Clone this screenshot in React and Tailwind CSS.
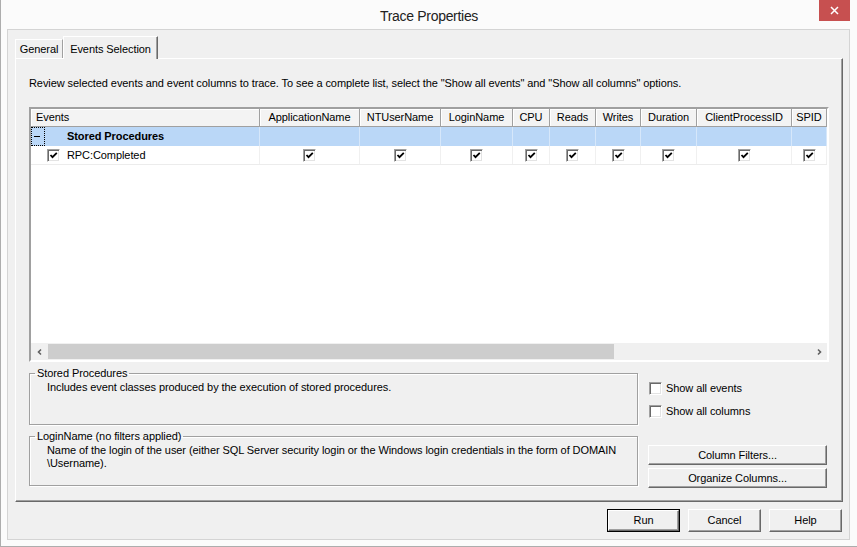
import React from 'react';

// column layout of the event grid (widths in px)
const COLUMNS = [
  { name: 'Events', w: 229 },
  { name: 'ApplicationName', w: 100 },
  { name: 'NTUserName', w: 81 },
  { name: 'LoginName', w: 72 },
  { name: 'CPU', w: 37 },
  { name: 'Reads', w: 46 },
  { name: 'Writes', w: 45 },
  { name: 'Duration', w: 56 },
  { name: 'ClientProcessID', w: 95 },
  { name: 'SPID', w: 35 },
];

const CheckBox = ({ checked }) => (
  <div className="w-[13px] h-[13px] shrink-0 bg-white border border-t-[#a0a0a0] border-l-[#a0a0a0] border-r-white border-b-white shadow-[inset_1px_1px_0_#696969,inset_-1px_-1px_0_#e3e3e3] flex items-center justify-center">
    {checked && (
      <svg width="11" height="11" viewBox="0 0 11 11">
        <polyline points="2.5,5 4.5,7.2 8.8,2.8" fill="none" stroke="#000" strokeWidth="1.8" />
      </svg>
    )}
  </div>
);

const Button = ({ children, primary, className = '' }) => (
  <div className={`${primary ? 'border border-black' : ''} ${className}`}>
    <div className="h-full w-full bg-[#f0f0f0] border border-t-white border-l-white border-r-[#696969] border-b-[#696969] shadow-[inset_-1px_-1px_0_#a0a0a0] flex items-center justify-center text-[11px] text-black">
      {children}
    </div>
  </div>
);

const Chevron = ({ dir }) => (
  <svg width="8" height="8" viewBox="0 0 8 8">
    <polyline
      points={dir === 'left' ? '5,1.5 2.5,4 5,6.5' : '3,1.5 5.5,4 3,6.5'}
      fill="none"
      stroke="#606060"
      strokeWidth="1.6"
    />
  </svg>
);

const EventGrid = () => (
  <div className="w-[800px] h-[255px] shrink-0 border-2 border-t-[#a0a0a0] border-l-[#a0a0a0] border-r-white border-b-white bg-white flex flex-col">
    {/* header */}
    <div className="flex h-[18px] shrink-0">
      {COLUMNS.map((c, i) => (
        <div
          key={c.name}
          style={{ width: c.w }}
          className={`h-full shrink-0 bg-[#f3f3f3] border-r border-b border-[#a0a0a0] shadow-[inset_1px_1px_0_#ffffff] flex items-center text-[11px] ${i === 0 ? 'pl-[5px]' : 'justify-center'}`}
        >
          {c.name}
        </div>
      ))}
    </div>
    {/* category row */}
    <div className="flex h-[19px] shrink-0 bg-[#bad7f7]">
      {COLUMNS.map((c, i) => (
        <div
          key={c.name}
          style={{ width: c.w }}
          className="h-full shrink-0 border-r border-[#d6e7fa] flex items-center"
        >
          {i === 0 && (
            <>
              <div className="w-[14px] h-[19px] border border-dotted border-black flex items-center pl-[2px]">
                <div className="w-[6px] h-px bg-black" />
              </div>
              <span className="ml-[22px] text-[11px] font-bold">Stored Procedures</span>
            </>
          )}
        </div>
      ))}
    </div>
    {/* event row */}
    <div className="flex h-[19px] shrink-0 border-b border-[#ececec]">
      {COLUMNS.map((c, i) => (
        <div
          key={c.name}
          style={{ width: c.w }}
          className={`h-full shrink-0 border-r border-[#f0f0f0] flex items-center ${i === 0 ? 'pl-[16px]' : 'justify-center'}`}
        >
          <CheckBox checked />
          {i === 0 && <span className="ml-[7px] text-[11px]">RPC:Completed</span>}
        </div>
      ))}
    </div>
    <div className="flex-1" />
    {/* horizontal scrollbar */}
    <div className="h-[17px] shrink-0 bg-[#f0f0f0] flex items-center">
      <div className="w-[17px] h-full flex items-center justify-center">
        <Chevron dir="left" />
      </div>
      <div className="w-[566px] h-[15px] bg-[#cdcdcd]" />
      <div className="flex-1" />
      <div className="w-[17px] h-full flex items-center justify-center">
        <Chevron dir="right" />
      </div>
    </div>
  </div>
);

const GroupBox = ({ title, className = '', children }) => (
  <fieldset className={`border border-[#a0a0a0] shadow-[inset_1px_1px_0_#ffffff,1px_1px_0_#ffffff] ${className}`}>
    <legend className="ml-[5px] px-[2px] text-[11px] leading-[14px]">{title}</legend>
    {children}
  </fieldset>
);

export default function App() {
  return (
    <div className="w-[857px] h-[547px] bg-[#fbfbfb] border-l border-b border-[#adadad] flex flex-col font-['Liberation_Sans',Arial,sans-serif] tracking-[-0.08px] text-black select-none overflow-hidden">
      {/* title bar */}
      <div className="relative h-[29px] shrink-0 flex items-center justify-center pt-[3px]">
        <span className="text-[14px] tracking-[-0.3px] text-[#222]">Trace Properties</span>
        <div className="absolute top-0 right-[7px] w-[31px] h-[21px] bg-[#c75050] flex items-center justify-center">
          <svg width="9" height="9" viewBox="0 0 9 9">
            <path d="M1 1L8 8M8 1L1 8" stroke="#fff" strokeWidth="1.5" />
          </svg>
        </div>
      </div>

      {/* client area */}
      <div className="flex-1 ml-[6px] mr-[7px] mb-[6px] border border-[#d4d4d4] bg-[#f0f0f0] flex flex-col">
        {/* tabs */}
        <div className="h-[28px] shrink-0 flex items-end pl-[7px]">
          <div className="h-[19px] w-[48px] border-t border-l border-white border-r border-r-[#a0a0a0] flex items-center justify-center pt-px text-[11px]">
            General
          </div>
          <div className="relative z-10 -mb-px h-[23px] w-[95px] bg-[#f0f0f0] border-t border-l border-white border-r border-r-[#696969] shadow-[inset_-1px_0_0_#a0a0a0] flex items-start justify-center pt-[4px] text-[11px]">
            Events Selection
          </div>
        </div>

        {/* tab page */}
        <div className="h-[444px] shrink-0 ml-[7px] mr-[6px] border border-t-white border-l-white border-r-[#696969] border-b-[#696969] shadow-[inset_-1px_-1px_0_#a0a0a0] flex flex-col pl-[13px] pr-[12px] pt-[17px]">
          <p className="text-[11px] leading-[14px]">
            Review selected events and event columns to trace. To see a complete list, select the "Show all events" and "Show all columns" options.
          </p>

          <div className="mt-[17px]">
            <EventGrid />
          </div>

          <div className="mt-[4px] flex">
            <div className="w-[609px] flex flex-col">
              <GroupBox title="Stored Procedures" className="h-[59px]">
                <p className="pl-[17px] text-[11px] leading-[14px]">
                  Includes event classes produced by the execution of stored procedures.
                </p>
              </GroupBox>
              <GroupBox title="LoginName (no filters applied)" className="h-[57px] mt-[4px]">
                <p className="pl-[17px] pr-[8px] pt-px text-[11px] leading-[13px]">
                  Name of the login of the user (either SQL Server security login or the Windows login credentials in the form of DOMAIN \Username).
                </p>
              </GroupBox>
            </div>

            <div className="ml-[10px] w-[179px] flex flex-col">
              <div className="mt-[16px] pl-px flex items-center gap-[4px] h-[13px]">
                <CheckBox />
                <span className="text-[11px]">Show all events</span>
              </div>
              <div className="mt-[10px] pl-px flex items-center gap-[4px] h-[13px]">
                <CheckBox />
                <span className="text-[11px]">Show all columns</span>
              </div>
              <Button className="mt-[27px] h-[20px]">Column Filters...</Button>
              <Button className="mt-[3px] h-[20px]">Organize Columns...</Button>
            </div>
          </div>
        </div>

        {/* dialog buttons */}
        <div className="mt-[7px] pr-[7px] flex justify-end gap-[8px]">
          <Button primary className="w-[73px] h-[23px]">Run</Button>
          <Button className="w-[73px] h-[23px]">Cancel</Button>
          <Button className="w-[73px] h-[23px]">Help</Button>
        </div>
      </div>
    </div>
  );
}
